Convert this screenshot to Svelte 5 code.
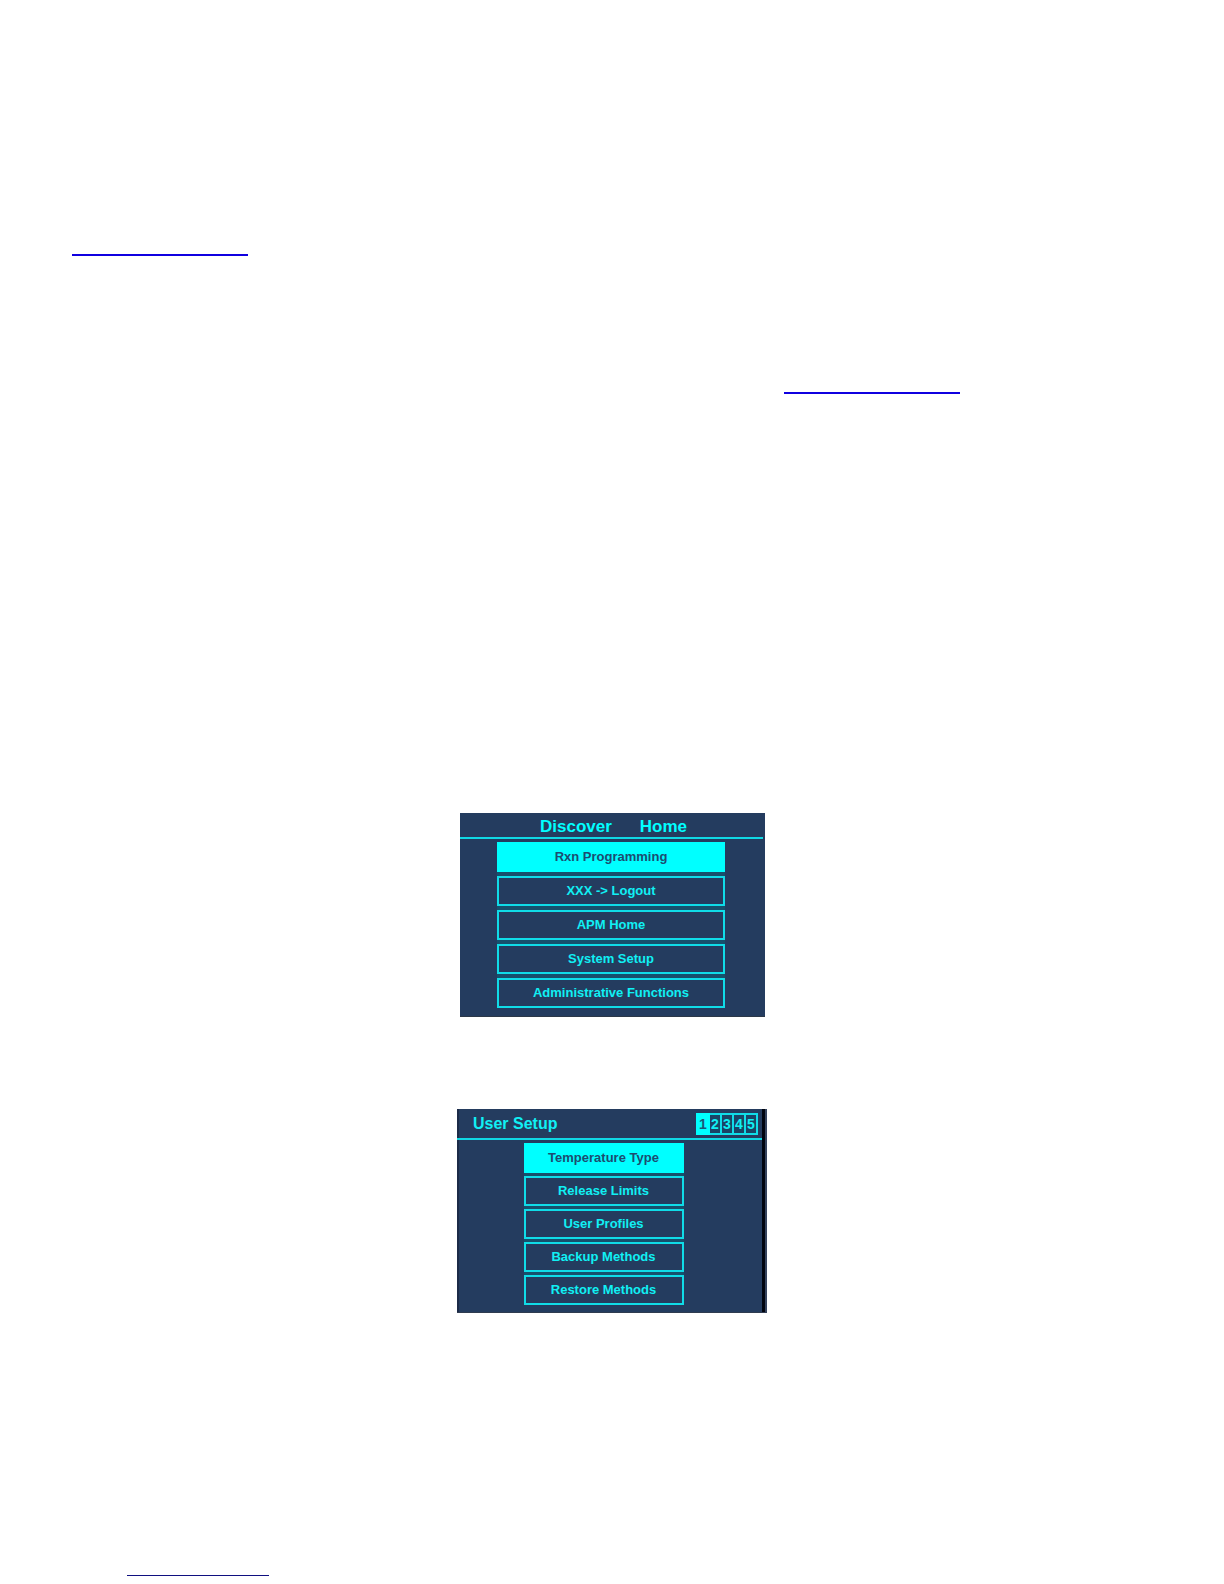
<script lang="ts">
	const homeItems = [
		'Rxn Programming',
		'XXX -> Logout',
		'APM Home',
		'System Setup',
		'Administrative Functions'
	];
	const setupItems = [
		'Temperature Type',
		'Release Limits',
		'User Profiles',
		'Backup Methods',
		'Restore Methods'
	];
	const pages = [1, 2, 3, 4, 5];

	let homeSelected = $state(0);
	let setupSelected = $state(0);
	let page = $state(1);
</script>

<main class="sheet" id="top">
	<a class="rule rule--first" href="#home" aria-label="Home screen"></a>
	<a class="rule rule--second" href="#setup" aria-label="User setup"></a>

	<section class="panel panel--home" id="home">
		<h2 class="title title--home"><span>Discover</span> <span>Home</span></h2>
		<div class="menu menu--home">
			{#each homeItems as item, i}
				<button class="item" class:selected={homeSelected === i} onclick={() => (homeSelected = i)}>
					{item}
				</button>
			{/each}
		</div>
	</section>

	<section class="panel panel--setup" id="setup">
		<header class="title title--setup">
			<h2>User Setup</h2>
			<nav class="pager" aria-label="Pages">
				{#each pages as n}
					<button class="page" class:current={page === n} onclick={() => (page = n)}>{n}</button>
				{/each}
			</nav>
		</header>
		<div class="menu menu--setup">
			{#each setupItems as item, i}
				<button class="item" class:selected={setupSelected === i} onclick={() => (setupSelected = i)}>
					{item}
				</button>
			{/each}
		</div>
	</section>

	<a class="rule rule--foot" href="#top" aria-label="Back to top"></a>
</main>

<style>
	:global(body) {
		margin: 0;
		background: #fff;
	}

	.sheet {
		display: flex;
		flex-direction: column;
		align-items: center;
		padding: 254px 72px 8px;
		font-family: 'Liberation Sans', Arial, sans-serif;
	}

	.rule {
		box-sizing: border-box;
		width: 176px;
		border-bottom: 2px solid #1000e0;
	}

	.rule--first {
		align-self: flex-start;
	}

	.rule--second {
		align-self: flex-end;
		margin: 136px 192px 0 0;
	}

	.rule--foot {
		align-self: flex-start;
		width: 142px;
		margin: 262px 0 0 55px;
		border-bottom: 1px solid #101080;
	}

	.panel {
		box-sizing: border-box;
		display: flex;
		flex-direction: column;
		background: #243c5f;
		color: #10f0f4;
	}

	.panel--home {
		width: 305px;
		margin-top: 419px;
		padding: 0 2px 8px 0;
		border-bottom: 1px solid #2c3848;
	}

	.panel--setup {
		width: 310px;
		margin-top: 92px;
		padding-bottom: 7px;
		border-right: 2px solid #34425c;
		border-bottom: 1px solid #303c50;
		box-shadow:
			inset -3px 0 #00040e,
			inset 2px 0 #1c2b48;
	}

	h2 {
		margin: 0;
		font-size: 16px;
		line-height: 20px;
		font-weight: 700;
	}

	.title {
		display: flex;
		border-bottom: 2px solid #10d8e4;
	}

	.title--home {
		justify-content: center;
		gap: 28px;
		padding: 4px 0 0 5px;
		color: #00ffff;
		font-size: 17px;
	}

	.title--setup {
		align-items: center;
		justify-content: space-between;
		margin-right: 3px;
		padding: 4px 4px 3px 16px;
	}

	.menu {
		display: flex;
		flex-direction: column;
		align-self: center;
		background: #17506c;
	}

	.menu--home {
		width: 228px;
		gap: 4px;
		margin-top: 3px;
	}

	.menu--setup {
		width: 160px;
		gap: 3px;
		margin: 3px 15px 0 0;
	}

	.item {
		height: 30px;
		padding: 0;
		border: 2px solid #10dce8;
		background: #243c5f;
		color: inherit;
		font: 700 13px/20px 'Liberation Sans', Arial, sans-serif;
		cursor: pointer;
	}

	.item.selected {
		border-color: #00ffff;
		background: #00ffff;
		color: #1c4c70;
	}

	.pager {
		display: flex;
		gap: 2px;
		padding: 2px;
		background: #10dce8;
	}

	.page {
		width: 10px;
		height: 18px;
		padding: 0;
		border: 0;
		background: #1a4466;
		color: inherit;
		font: 700 14px/18px 'Liberation Sans', Arial, sans-serif;
		cursor: pointer;
	}

	.page.current {
		background: #00ffff;
		box-shadow: 0 0 0 2px #00ffff;
		color: #1c5878;
	}
</style>
